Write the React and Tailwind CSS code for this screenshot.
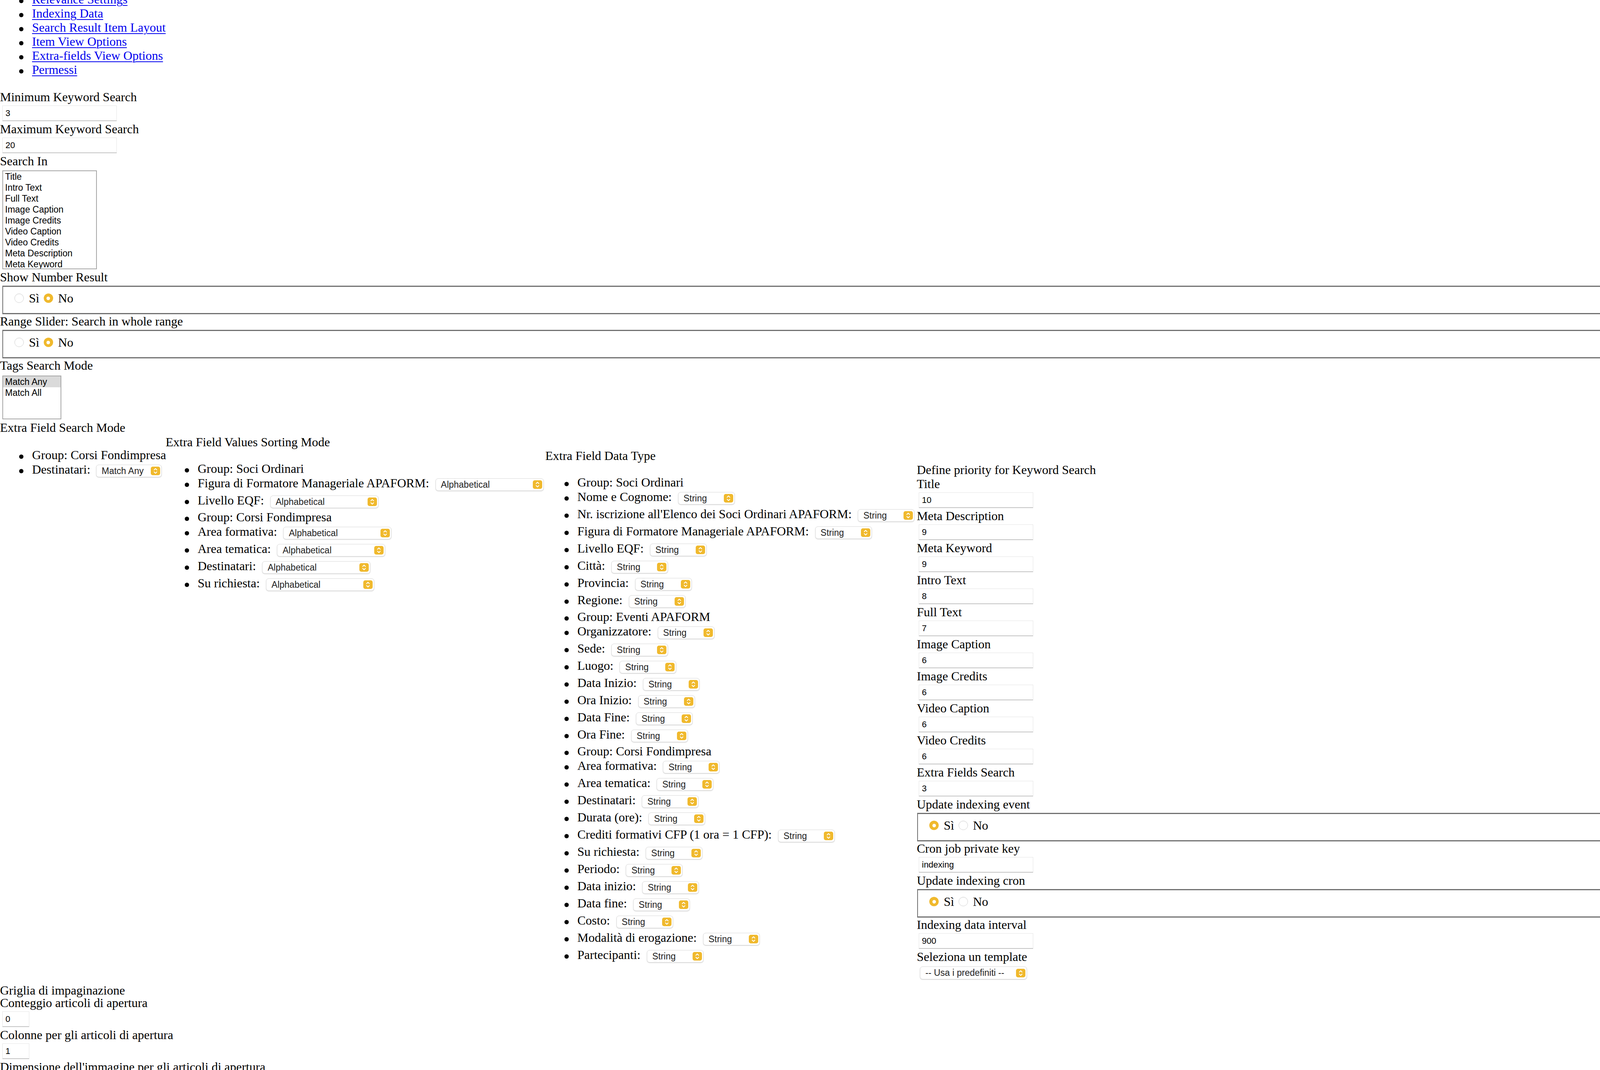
import React from 'react'

const sans = "font-['Liberation_Sans',Arial,sans-serif]"

function Bullet({ top }) {
    return (
        <div className="w-[82px] shrink-0">
            <div className={`ml-[49px] h-[11px] w-[11px] rounded-full bg-black ${top}`}></div>
        </div>
    )
}

function Label({ children }) {
    return <div className="h-[36px] whitespace-nowrap">{children}</div>
}

function TextInput({ value, w = 'w-[293px]', ml = 'ml-[6px]' }) {
    return (
        <div className={`${ml} ${w} ${sans} mt-[4px] mb-[2px] flex h-[40px] items-center border border-[#e4e4e4] border-b-2 border-b-[#c4c4c4] bg-white pl-[7px] text-[22px] leading-none text-black`}>
            {value}
        </div>
    )
}

function Chevrons() {
    return (
        <div className="flex h-[22px] w-[24px] shrink-0 items-center justify-center rounded-[5px] bg-[#f0b92d]">
            <svg width="24" height="22" viewBox="0 0 24 22" fill="none">
                <path d="M8.5 8.5 L12 5 L15.5 8.5" stroke="white" strokeWidth="2" strokeLinecap="round" strokeLinejoin="round" />
                <path d="M8.5 13.5 L12 17 L15.5 13.5" stroke="white" strokeWidth="2" strokeLinecap="round" strokeLinejoin="round" />
            </svg>
        </div>
    )
}

function Select({ value, w, extra = '' }) {
    return (
        <div className={`${w} ${extra} ${sans} flex h-[32px] shrink-0 items-center justify-between rounded-[7px] border border-[#dadada] bg-white pl-[13px] pr-[3px] text-[23px] leading-none text-[#222] shadow-[0_1px_2px_rgba(0,0,0,0.18)]`}>
            <span className="whitespace-nowrap">{value}</span>
            <Chevrons />
        </div>
    )
}

function Radio({ checked }) {
    if (checked) {
        return (
            <div className="flex h-[24px] w-[24px] shrink-0 items-center justify-center rounded-full bg-[#f0b92d]">
                <div className="h-[9px] w-[9px] rounded-full bg-white"></div>
            </div>
        )
    }
    return <div className="h-[24px] w-[24px] shrink-0 rounded-full border-[1.5px] border-[#d2d2d2] bg-white shadow-[inset_0_1px_2px_rgba(0,0,0,0.06)]"></div>
}

// fieldset runs on to the right edge of the page, its right border never shows
function YesNo({ yes, ml }) {
    return (
        <div className={`${ml} mt-[4px] h-[73px] border-t-[3px] border-b-[3px] border-l-2 border-[#707070] pl-[29px] pt-[11px]`}>
            <div className="flex h-[36px] items-center">
                <Radio checked={yes} />
                <span className="ml-[13px]">Sì</span>
                <div className="ml-[11px]"><Radio checked={!yes} /></div>
                <span className="ml-[13px]">No</span>
            </div>
        </div>
    )
}

function GroupRow({ label }) {
    return (
        <li className="flex h-[36px] whitespace-nowrap">
            <Bullet top="mt-[17px]" />
            <span>{label}</span>
        </li>
    )
}

function FieldRow({ label, value, w, gap = 'ml-[16px]' }) {
    return (
        <li className="flex h-[44px] items-start whitespace-nowrap">
            <Bullet top="mt-[18px]" />
            <span className="mt-[1px]">{label}:</span>
            <Select value={value} w={w} extra={`${gap} mt-[7px]`} />
        </li>
    )
}

const sortingFields = [
    { group: 'Group: Soci Ordinari' },
    { label: 'Figura di Formatore Manageriale APAFORM' },
    { label: 'Livello EQF' },
    { group: 'Group: Corsi Fondimpresa' },
    { label: 'Area formativa' },
    { label: 'Area tematica' },
    { label: 'Destinatari' },
    { label: 'Su richiesta' },
]

const typeFields = [
    { group: 'Group: Soci Ordinari' },
    { label: 'Nome e Cognome' },
    { label: "Nr. iscrizione all'Elenco dei Soci Ordinari APAFORM" },
    { label: 'Figura di Formatore Manageriale APAFORM' },
    { label: 'Livello EQF' },
    { label: 'Città' },
    { label: 'Provincia' },
    { label: 'Regione' },
    { group: 'Group: Eventi APAFORM' },
    { label: 'Organizzatore' },
    { label: 'Sede' },
    { label: 'Luogo' },
    { label: 'Data Inizio' },
    { label: 'Ora Inizio' },
    { label: 'Data Fine' },
    { label: 'Ora Fine' },
    { group: 'Group: Corsi Fondimpresa' },
    { label: 'Area formativa' },
    { label: 'Area tematica' },
    { label: 'Destinatari' },
    { label: 'Durata (ore)' },
    { label: 'Crediti formativi CFP (1 ora = 1 CFP)' },
    { label: 'Su richiesta' },
    { label: 'Periodo' },
    { label: 'Data inizio' },
    { label: 'Data fine' },
    { label: 'Costo' },
    { label: 'Modalità di erogazione' },
    { label: 'Partecipanti' },
]

const priorities = [
    ['Title', '10'],
    ['Meta Description', '9'],
    ['Meta Keyword', '9'],
    ['Intro Text', '8'],
    ['Full Text', '7'],
    ['Image Caption', '6'],
    ['Image Credits', '6'],
    ['Video Caption', '6'],
    ['Video Credits', '6'],
    ['Extra Fields Search', '3'],
]

const searchIn = ['Title', 'Intro Text', 'Full Text', 'Image Caption', 'Image Credits', 'Video Caption', 'Video Credits', 'Meta Description', 'Meta Keyword']

const tabs = ['Relevance Settings', 'Indexing Data', 'Search Result Item Layout', 'Item View Options', 'Extra-fields View Options', 'Permessi']

export default function App() {
    return (
        <div className="h-[2738px] w-full overflow-hidden bg-white font-['Liberation_Serif','Times_New_Roman',serif] text-[32px] leading-[36px] text-black">
            {/* tab links, page is scrolled a little so the first one is cut */}
            <ul className="-mt-[20px] mb-[34px]">
                {tabs.map(t => (
                    <li key={t} className="flex h-[36px] whitespace-nowrap">
                        <Bullet top="mt-[17px]" />
                        <a href="#" className="text-[#0000ee] underline decoration-[2px] underline-offset-[4px]">{t}</a>
                    </li>
                ))}
            </ul>

            <Label>Minimum Keyword Search</Label>
            <TextInput value="3" />
            <Label>Maximum Keyword Search</Label>
            <TextInput value="20" />

            <Label>Search In</Label>
            <div className={`${sans} mb-[2px] ml-[6px] mt-[6px] h-[253px] w-[242px] overflow-hidden border-2 border-[#a6a6a6] bg-white text-[23px]`}>
                {searchIn.map(o => (
                    <div key={o} className="h-[28px] whitespace-nowrap pl-[5px] leading-[28px]">{o}</div>
                ))}
            </div>

            <Label>Show Number Result</Label>
            <YesNo yes={false} ml="ml-[6px]" />
            <Label>Range Slider: Search in whole range</Label>
            <YesNo yes={false} ml="ml-[6px]" />

            <Label>Tags Search Mode</Label>
            <div className={`${sans} mb-[3px] ml-[6px] mt-[8px] h-[112px] w-[151px] overflow-hidden border-2 border-[#a6a6a6] bg-white text-[23px]`}>
                <div className="h-[28px] bg-[#dadada] pl-[5px] leading-[28px]">Match Any</div>
                <div className="h-[28px] pl-[5px] leading-[28px]">Match All</div>
            </div>

            <Label>Extra Field Search Mode</Label>
            <div className="flex items-start">
                {/* search mode */}
                <div className="w-[424px] shrink-0 pt-[34px]">
                    <ul>
                        <GroupRow label="Group: Corsi Fondimpresa" />
                        <FieldRow label="Destinatari" value="Match Any" w="w-[168px]" gap="ml-[15px]" />
                    </ul>
                </div>

                {/* sorting mode */}
                <div className="w-[972px] shrink-0 pt-[1px]">
                    <Label>Extra Field Values Sorting Mode</Label>
                    <ul className="mt-[32px]">
                        {sortingFields.map((f, i) =>
                            f.group
                                ? <GroupRow key={i} label={f.group} />
                                : <FieldRow key={i} label={f.label} value="Alphabetical" w="w-[277px]" />
                        )}
                    </ul>
                </div>

                {/* data type */}
                <div className="w-[951px] shrink-0 pt-[36px]">
                    <Label>Extra Field Data Type</Label>
                    <ul className="mt-[32px]">
                        {typeFields.map((f, i) =>
                            f.group
                                ? <GroupRow key={i} label={f.group} />
                                : <FieldRow key={i} label={f.label} value="String" w="w-[145px]" />
                        )}
                    </ul>
                </div>

                {/* priority */}
                <div className="min-w-0 flex-1 pt-[72px]">
                    <Label>Define priority for Keyword Search</Label>
                    {priorities.map(([l, v]) => (
                        <div key={l}>
                            <Label>{l}</Label>
                            <TextInput value={v} ml="ml-[5px]" />
                        </div>
                    ))}
                    <Label>Update indexing event</Label>
                    <YesNo yes={true} ml="ml-[1px]" />
                    <Label>Cron job private key</Label>
                    <TextInput value="indexing" ml="ml-[5px]" />
                    <Label>Update indexing cron</Label>
                    <YesNo yes={true} ml="ml-[1px]" />
                    <Label>Indexing data interval</Label>
                    <TextInput value="900" ml="ml-[5px]" />
                    <Label>Seleziona un template</Label>
                    <Select value="-- Usa i predefiniti --" w="w-[274px]" extra="ml-[8px] mt-[7px] mb-[10px] h-[33px]" />
                </div>
            </div>

            <div className="h-[32px] whitespace-nowrap">Griglia di impaginazione</div>
            <Label>Conteggio articoli di apertura</Label>
            <TextInput value="0" w="w-[69px]" />
            <Label>Colonne per gli articoli di apertura</Label>
            <TextInput value="1" w="w-[69px]" />
            <Label>Dimensione dell'immagine per gli articoli di apertura</Label>
        </div>
    )
}
